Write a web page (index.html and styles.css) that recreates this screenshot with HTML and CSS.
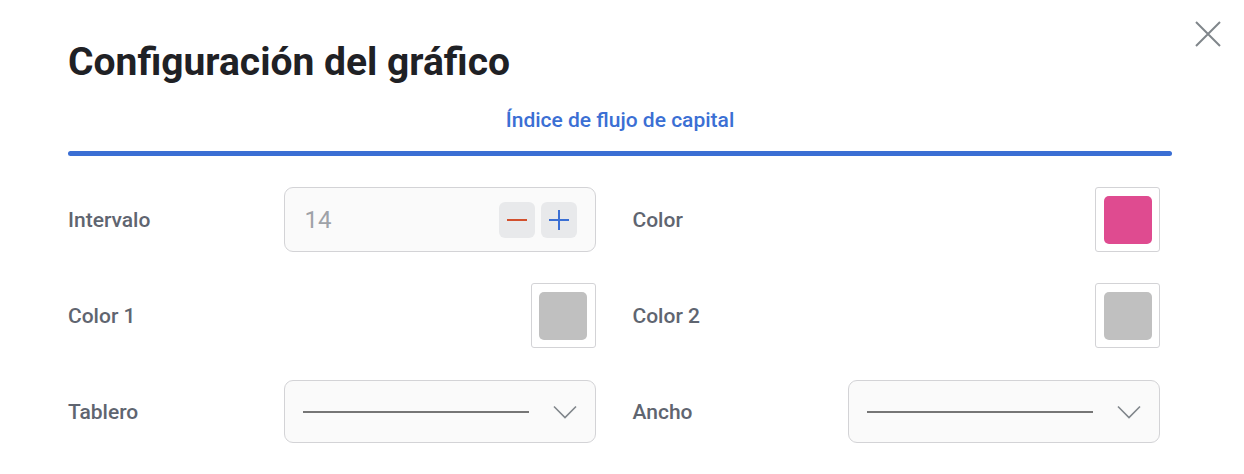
FILE: index.html
```html
<!DOCTYPE html>
<html lang="es">
<head>
<meta charset="utf-8">
<title>Configuración del gráfico</title>
<link rel="stylesheet" href="styles.css">
</head>
<body>
<div class="dialog">
  <button class="close" aria-label="Cerrar">
    <svg width="26" height="26" viewBox="0 0 26 26"><path d="M1 1L25 25M25 1L1 25" stroke="#80868b" stroke-width="2" fill="none"/></svg>
  </button>
  <h1 class="title">Configuración del gráfico</h1>
  <div class="tabs">
    <div class="tab">Índice de flujo de capital</div>
    <div class="tab-bar"></div>
  </div>
  <div class="form">
    <div class="field">
      <span class="label">Intervalo</span>
      <div class="stepper">
        <span class="value">14</span>
        <div class="buttons">
          <button class="step"><svg width="20" height="20" viewBox="0 0 20 20"><path d="M0 10H20" stroke="#d2502d" stroke-width="2"/></svg></button>
          <button class="step"><svg width="20" height="20" viewBox="0 0 20 20"><path d="M0 10H20M10 0V20" stroke="#3b6fd4" stroke-width="2"/></svg></button>
        </div>
      </div>
    </div>
    <div class="field">
      <span class="label">Color</span>
      <div class="swatch"><span class="chip chip-pink"></span></div>
    </div>
    <div class="field">
      <span class="label">Color 1</span>
      <div class="swatch"><span class="chip chip-gray"></span></div>
    </div>
    <div class="field">
      <span class="label">Color 2</span>
      <div class="swatch"><span class="chip chip-gray"></span></div>
    </div>
    <div class="field">
      <span class="label">Tablero</span>
      <div class="select">
        <span class="line-sample"></span>
        <svg width="24" height="14" viewBox="0 0 24 14"><path d="M1 1.5L12 12.5L23 1.5" stroke="#80868b" stroke-width="1.6" fill="none"/></svg>
      </div>
    </div>
    <div class="field">
      <span class="label">Ancho</span>
      <div class="select">
        <span class="line-sample"></span>
        <svg width="24" height="14" viewBox="0 0 24 14"><path d="M1 1.5L12 12.5L23 1.5" stroke="#80868b" stroke-width="1.6" fill="none"/></svg>
      </div>
    </div>
  </div>
</div>
</body>
</html>
```
FILE: styles.css
```css
html, body {
  margin: 0;
  padding: 0;
  background: #ffffff;
  font-family: Roboto, "Liberation Sans", Arial, sans-serif;
}

.dialog {
  position: relative;
  width: 1244px;
  height: 474px;
  box-sizing: border-box;
  padding: 39px 72px 0 68px;
}

.close {
  position: absolute;
  top: 21px;
  right: 23px;
  border: 0;
  background: none;
  padding: 0;
  width: 26px;
  height: 26px;
  display: flex;
}

.title {
  margin: 0;
  font-size: 39px;
  line-height: 46px;
  font-weight: 700;
  color: #1f2125;
}

.tabs {
  margin-top: 22px;
  display: flex;
  flex-direction: column;
  align-items: center;
}

.tab {
  font-size: 21px;
  line-height: 26px;
  font-weight: 500;
  color: #3b6fd4;
}

.tab-bar {
  margin-top: 18px;
  align-self: stretch;
  height: 5px;
  border-radius: 3px;
  background: #3b6fd4;
}

.form {
  margin-top: 31px;
  width: 1092px;
  display: grid;
  grid-template-columns: 1fr 1fr;
  grid-auto-rows: 65px;
  column-gap: 37px;
  row-gap: 31px;
}

.field {
  display: flex;
  align-items: center;
  justify-content: space-between;
}

.label {
  font-size: 21px;
  font-weight: 500;
  color: #5f6570;
}

.stepper {
  width: 312px;
  height: 65px;
  box-sizing: border-box;
  border: 1px solid #d3d3d6;
  border-radius: 9px;
  background: #fafafa;
  display: flex;
  align-items: center;
  justify-content: space-between;
  padding: 0 18px 0 20px;
}

.value {
  font-size: 24px;
  color: #9ea2a8;
}

.buttons {
  display: flex;
  gap: 6px;
}

.step {
  width: 36px;
  height: 36px;
  border: 0;
  padding: 0;
  border-radius: 6px;
  background: #e8e9eb;
  display: flex;
  align-items: center;
  justify-content: center;
}

.swatch {
  width: 65px;
  height: 65px;
  box-sizing: border-box;
  border: 1px solid #d3d3d6;
  border-radius: 3px;
  background: #ffffff;
  display: flex;
  align-items: center;
  justify-content: center;
}

.chip {
  width: 48px;
  height: 48px;
  border-radius: 5px;
}

.chip-pink {
  background: #df4b90;
}

.chip-gray {
  background: #c0c0c0;
}

.select {
  width: 312px;
  height: 63px;
  box-sizing: border-box;
  border: 1px solid #d3d3d6;
  border-radius: 9px;
  background: #fafafa;
  display: flex;
  align-items: center;
  justify-content: space-between;
  padding: 0 18px 0 18px;
}

.line-sample {
  width: 226px;
  height: 2px;
  background: #767676;
}
```
